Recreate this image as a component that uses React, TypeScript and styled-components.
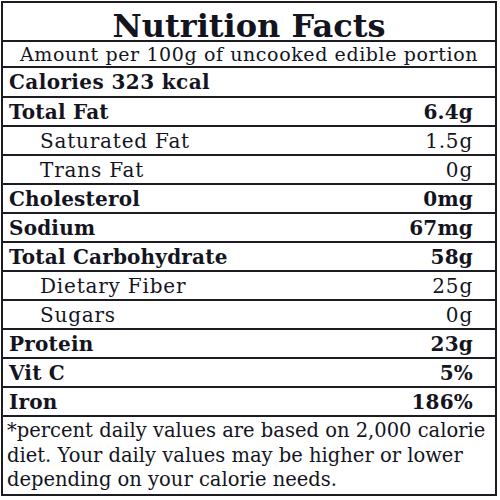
import styled, { createGlobalStyle } from "styled-components";

const GlobalStyle = createGlobalStyle`
  html, body {
    margin: 0;
    padding: 0;
    background: #ffffff;
  }
  body {
    font-family: "DejaVu Serif", "Liberation Serif", serif;
    color: #14141e;
  }
`;

type Row = {
  label: string;
  value: string;
  sub?: boolean;
};

const rows: Row[] = [
  { label: "Total Fat", value: "6.4g" },
  { label: "Saturated Fat", value: "1.5g", sub: true },
  { label: "Trans Fat", value: "0g", sub: true },
  { label: "Cholesterol", value: "0mg" },
  { label: "Sodium", value: "67mg" },
  { label: "Total Carbohydrate", value: "58g" },
  { label: "Dietary Fiber", value: "25g", sub: true },
  { label: "Sugars", value: "0g", sub: true },
  { label: "Protein", value: "23g" },
  { label: "Vit C", value: "5%" },
  { label: "Iron", value: "186%" },
];

const App = () => {
  return (
    <>
      <GlobalStyle />
      <Label>
        <Title>Nutrition Facts</Title>
        <Amount>Amount per 100g of uncooked edible portion</Amount>
        <Calories>Calories 323 kcal</Calories>
        {rows.map((r) => (
          <NutrientRow key={r.label} $sub={r.sub}>
            <span>{r.label}</span>
            <span>{r.value}</span>
          </NutrientRow>
        ))}
        <Footnote>
          *percent daily values are based on 2,000 calorie
          <br />
          diet. Your daily values may be higher or lower
          <br />
          depending on your calorie needs.
        </Footnote>
      </Label>
    </>
  );
};

export default App;

const Label = styled.div`
  box-sizing: border-box;
  width: 496px;
  height: 495px;
  margin: 1px 0 0 1px;
  border: 2px solid #1c1c22;
  display: flex;
  flex-direction: column;
`;

const Title = styled.h1`
  margin: 0;
  box-sizing: border-box;
  height: 39px;
  min-height: 0;
  flex-shrink: 0;
  padding-top: 8px;
  border-bottom: 2px solid #1c1c22;
  display: flex;
  align-items: center;
  justify-content: center;
  font-size: 32px;
  font-weight: 700;
  line-height: 1;
`;

const Amount = styled.div`
  height: 26px;
  flex-shrink: 0;
  box-sizing: border-box;
  border-bottom: 2px solid #1c1c22;
  display: flex;
  align-items: center;
  justify-content: center;
  padding-top: 1px;
  font-size: 19px;
  letter-spacing: 0.6px;
  line-height: 1;
`;

const Calories = styled.div`
  height: 30px;
  flex-shrink: 0;
  box-sizing: border-box;
  border-bottom: 2px solid #1c1c22;
  display: flex;
  align-items: center;
  padding-left: 6px;
  font-size: 20px;
  font-weight: 700;
  letter-spacing: 0.4px;
  line-height: 1;
`;

const NutrientRow = styled.div<{ $sub?: boolean }>`
  height: 29px;
  flex-shrink: 0;
  box-sizing: border-box;
  border-bottom: 2px solid #1c1c22;
  display: flex;
  align-items: center;
  justify-content: space-between;
  padding: 0 22px 0 ${(p) => (p.$sub ? "37px" : "6px")};
  font-size: 20px;
  font-weight: ${(p) => (p.$sub ? 400 : 700)};
  letter-spacing: ${(p) => (p.$sub ? "0.8px" : "0.2px")};
  line-height: 1;
`;

const Footnote = styled.p`
  flex: 1;
  min-height: 0;
  margin: 0;
  padding: 2px 0 0 4px;
  font-size: 19.5px;
  line-height: 24.5px;
  white-space: nowrap;
`;
